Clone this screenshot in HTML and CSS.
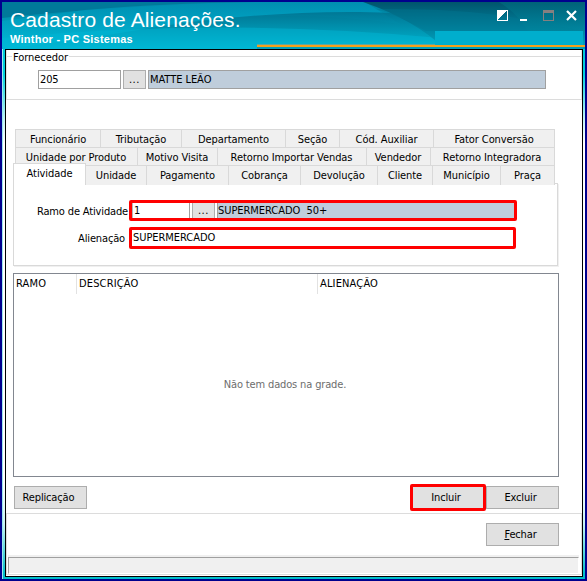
FILE: index.html
```html
<!DOCTYPE html>
<html lang="pt-BR">
<head>
<meta charset="utf-8">
<title>Cadastro de Alienações</title>
<link rel="stylesheet" href="styles.css">
</head>
<body>
<div class="window">
  <header class="titlebar">
    <svg class="waves" width="583" height="47" viewBox="2 2 583 47">
      <defs>
        <linearGradient id="sky" x1="0" y1="0" x2="0" y2="1"><stop offset="0" stop-color="#007f9f"/><stop offset="1" stop-color="#00bfda"/></linearGradient>
        <linearGradient id="dark" x1="0" y1="0" x2="0" y2="1"><stop offset="0" stop-color="#006d8a"/><stop offset="1" stop-color="#00b4d0"/></linearGradient>
        <linearGradient id="glow" x1="0" y1="0" x2="0" y2="1"><stop offset="0" stop-color="#0096ba"/><stop offset="1" stop-color="#00b8d5"/></linearGradient>
        <linearGradient id="deep" x1="0" y1="0" x2="0" y2="1"><stop offset="0" stop-color="#00546c"/><stop offset="1" stop-color="#00a8c6"/></linearGradient>
        <linearGradient id="edge" x1="0" y1="0" x2="0" y2="1"><stop offset="0" stop-color="#00697f"/><stop offset="1" stop-color="#00859d"/></linearGradient>
      </defs>
      <path fill="url(#sky)" d="M2 2h583v47H2z"/>
      <path fill="#00799a" d="M2 2h258Q110 6 2 18z"/>
      <path fill="url(#glow)" d="M85 10Q200 0 365 2L400 24Q280 6 140 28Q60 39 2 49V21z" opacity=".65"/>
      <path fill="url(#dark)" d="M150 28Q260 11 360 12Q440 13 500 30V49H2Q80 40 150 28z" opacity=".75"/>
      <path fill="#00b9d7" d="M2 38Q220 17 440 38V49H2z" opacity=".45"/>
      <path fill="url(#deep)" d="M363 2H585V49H445Q415 20 363 2z"/>
      <path fill="#007894" d="M376 9Q480 8 540 23L585 31H426Q405 18 376 9z" opacity=".4"/>
      <path fill="url(#edge)" d="M499 2Q518 14 528 31H585V2z" opacity=".65"/>
      <path fill="#00aecd" d="M435 31H583V45H435z"/>
      <path fill="#5da7a0" d="M257 44H435v1H257z"/>
      <path fill="#f4a01c" d="M257 45H585v2H257z"/>
      <path fill="#00a0bb" d="M257 47H585v2H257z"/>
    </svg>
    <div class="caption">
      <h1>Cadastro de Alienações.</h1>
      <p>Winthor - PC Sistemas</p>
    </div>
    <svg class="controls" width="82" height="14" viewBox="496 9 82 14" shape-rendering="crispEdges">
      <path d="M497.5 10.5h10v10h-10z" fill="none" stroke="#fff"/>
      <path d="M497 10h10L497 20z" fill="#fff"/>
      <path d="M520 19h7v2h-7z" fill="#fff"/>
      <path d="M543.5 10.5h10v10h-10z" fill="none" stroke="#858080"/>
      <path d="M543 10h11v3h-11z" fill="#858080"/>
      <path d="M567 11l9 9M576 11l-9 9" fill="none" stroke="#fff" stroke-width="2.2" shape-rendering="auto"/>
    </svg>
  </header>

  <div class="frame">
    <main class="client">
      <section class="group">
        <span class="legend">Fornecedor</span>
        <div class="supplier">
          <div class="field code">205</div>
          <div class="browse">...</div>
          <div class="field readonly name">MATTE LEÃO</div>
        </div>
      </section>

      <section class="tabs">
        <div class="row r1">
          <div class="tab"><span>Funcionário</span></div><div class="tab"><span>Tributação</span></div><div class="tab"><span>Departamento</span></div><div class="tab"><span>Seção</span></div><div class="tab"><span>Cód. Auxiliar</span></div><div class="tab"><span>Fator Conversão</span></div>
        </div>
        <div class="row r2">
          <div class="tab"><span>Unidade por Produto</span></div><div class="tab"><span>Motivo Visita</span></div><div class="tab"><span>Retorno Importar Vendas</span></div><div class="tab"><span>Vendedor</span></div><div class="tab"><span>Retorno Integradora</span></div>
        </div>
        <div class="row r3">
          <div class="tab active"><span>Atividade</span></div><div class="tab"><span>Unidade</span></div><div class="tab"><span>Pagamento</span></div><div class="tab"><span>Cobrança</span></div><div class="tab"><span>Devolução</span></div><div class="tab"><span>Cliente</span></div><div class="tab"><span>Município</span></div><div class="tab"><span>Praça</span></div>
        </div>
        <div class="page">
          <div class="line">
            <span class="label">Ramo de Atividade</span>
            <div class="marked lookup">
              <div class="cell number">1</div>
              <div class="cell dots">...</div>
              <div class="cell result">SUPERMERCADO&nbsp; 50+</div>
            </div>
          </div>
          <div class="line second">
            <span class="label short">Alienação</span>
            <div class="marked text">SUPERMERCADO</div>
          </div>
        </div>
      </section>

      <section class="grid">
        <div class="head"><span>RAMO</span><span>DESCRIÇÃO</span><span>ALIENAÇÃO</span></div>
        <div class="empty">Não tem dados na grade.</div>
      </section>

      <div class="actions">
        <div class="button replicate">Replicação</div>
        <div class="button include">Incluir</div>
        <div class="button exclude">Excluir</div>
      </div>

      <footer class="bottom">
        <div class="button close"><span><u>F</u>echar</span></div>
        <div class="status"></div>
      </footer>
    </main>
  </div>
</div>
</body>
</html>
```

FILE: styles.css
```css
* { box-sizing: border-box; }
body {
  margin: 0;
  font: 11px/14px "DejaVu Sans Condensed", "DejaVu Sans", sans-serif;
  font-stretch: condensed;
  letter-spacing: -0.15px;
  color: #000;
  white-space: nowrap;
}
.window { width: 587px; height: 581px; border: 2px solid #00008e; overflow: hidden; }
.titlebar { height: 47px; display: grid; grid-template-columns: 494px 1fr; position: relative; }
.waves { position: absolute; left: 0; top: 0; }
.caption { position: relative; padding: 6px 0 0 8px; color: #fff; font-family: "Liberation Sans", sans-serif; }
.caption h1 { margin: 0; font-size: 21px; font-weight: normal; line-height: 24px; letter-spacing: 0.13px; }
.caption p { margin: 0; font-size: 11px; font-weight: bold; line-height: 14px; letter-spacing: 0.24px; }
.controls { position: relative; margin-top: 7px; }
.frame {
  height: 530px;
  padding: 0 2px 2px 3px;
  background: linear-gradient(#00c8d8 0, #00d2df 25px, #bff3f7 70px, #fff 95px, #fff 430px, #c8f4f6 475px, #00bfcb 525px);
  box-shadow: inset 1px 0 #9ce8ef, inset 0 -2px #00bfcb;
}
.client { display: flex; flex-direction: column; height: 528px; border: 1px solid #000; background: #fff; }
.group { height: 50px; padding-top: 1px; background: linear-gradient(#dcdcdc, #dcdcdc) 0 6px / 100% 1px no-repeat; border-bottom: 1px solid #dcdcdc; border-left: 1px solid #e4e4e4; border-right: 1px solid #e4e4e4; }
.legend { display: block; width: 57px; margin-left: 5px; padding-left: 1px; line-height: 13px; letter-spacing: -0.05px; background: #fff; }
.supplier { display: flex; margin: 6px 0 0 31px; }
.field { height: 19px; border: 1px solid #a0a0a0; padding-left: 1px; line-height: 17px; }
.code { width: 83px; }
.browse { width: 23px; height: 19px; margin: 0 2px; border: 1px solid #adadad; background: #e1e1e1; text-align: center; line-height: 18px; letter-spacing: 0.6px; }
.readonly { background: #bfcddb; }
.name { width: 398px; letter-spacing: -0.05px; }
.tabs { margin: 29px 0 0 7px; width: 546px; }
.row { display: grid; height: 18px; margin-left: 2px; width: 540px; border-left: 1px solid #d9d9d9; }
.r1 { grid-template-columns: 85px 81px 104px 54px 94px 121px; }
.r2 { grid-template-columns: 122px 80px 149px 64px 124px; }
.r3 { grid-template-columns: 73px 61px 82px 72px 77px 55px 68px 54px; margin-left: 0; width: 542px; border-left: 0; }
.tab { display: flex; justify-content: center; border-top: 1px solid #d9d9d9; border-right: 1px solid #d9d9d9; background: #f0f0f0; padding-top: 3px; letter-spacing: -0.08px; }
.r2 .tab { padding-right: 1px; }
.row .active { height: 22px; margin-top: -2px; border-left: 1px solid #d9d9d9; background: #fff; position: relative; z-index: 1; }
.page { height: 83px; width: 545px; padding-top: 16px; border: 1px solid #d9d9d9; box-shadow: 1px 1px #f0f0f0; }
.line { display: flex; }
.second { margin-top: 6px; }
.label { width: 115px; padding: 5px 1px 0 0; text-align: right; }
.label.short { padding-right: 4px; }
.marked { border: 3px solid #f00; border-radius: 2px; height: 21px; line-height: 15px; }
.lookup { display: flex; width: 388px; }
.cell { height: 15px; }
.number { width: 58px; padding-left: 1px; border-right: 1px solid #a0a0a0; border-left: 1px solid #b8b8b8; }
.dots { width: 23px; margin: 0 2px; text-align: center; letter-spacing: 0.6px; background: #e1e1e1; border: solid #adadad; border-width: 0 1px; }
.result { flex: 1; letter-spacing: -0.05px; background: #bfcddb; border-left: 1px solid #a0a0a0; }
.text { width: 387px; height: 22px; padding-left: 1px; letter-spacing: -0.05px; }
.grid { height: 204px; width: 546px; margin: 7px 0 0 7px; border: 1px solid #828790; }
.head { display: grid; grid-template-columns: 63px 241px 1fr; height: 19px; line-height: 20px; letter-spacing: 0.15px; }
.head span { padding-left: 2px; border-right: 1px solid #e2e2e2; }
.head span:last-child { border-right: 0; }
.empty { margin: 85px 2px 0 0; text-align: center; color: #6d6d6d; }
.actions { display: flex; margin: 9px 0 0 8px; height: 27px; }
.button { width: 73px; height: 23px; border: 1px solid #adadad; background: #e1e1e1; text-align: center; line-height: 21px; padding-right: 4px; }
.include { width: 76px; height: 27px; margin: -2px 0 0 323px; border: 3px solid #f00; border-radius: 2px; }
.bottom { height: 62px; border: 1px solid #dcdcdc; padding-top: 9px; }
.close { margin-left: 479px; }
.status { height: 17px; margin: 11px 2px 0 1px; border: 1px solid #a0a0a0; border-right-color: #fff; border-bottom-color: #fff; background: #f0f0f0; box-shadow: 0 -2px #f0f0f0; }
```
